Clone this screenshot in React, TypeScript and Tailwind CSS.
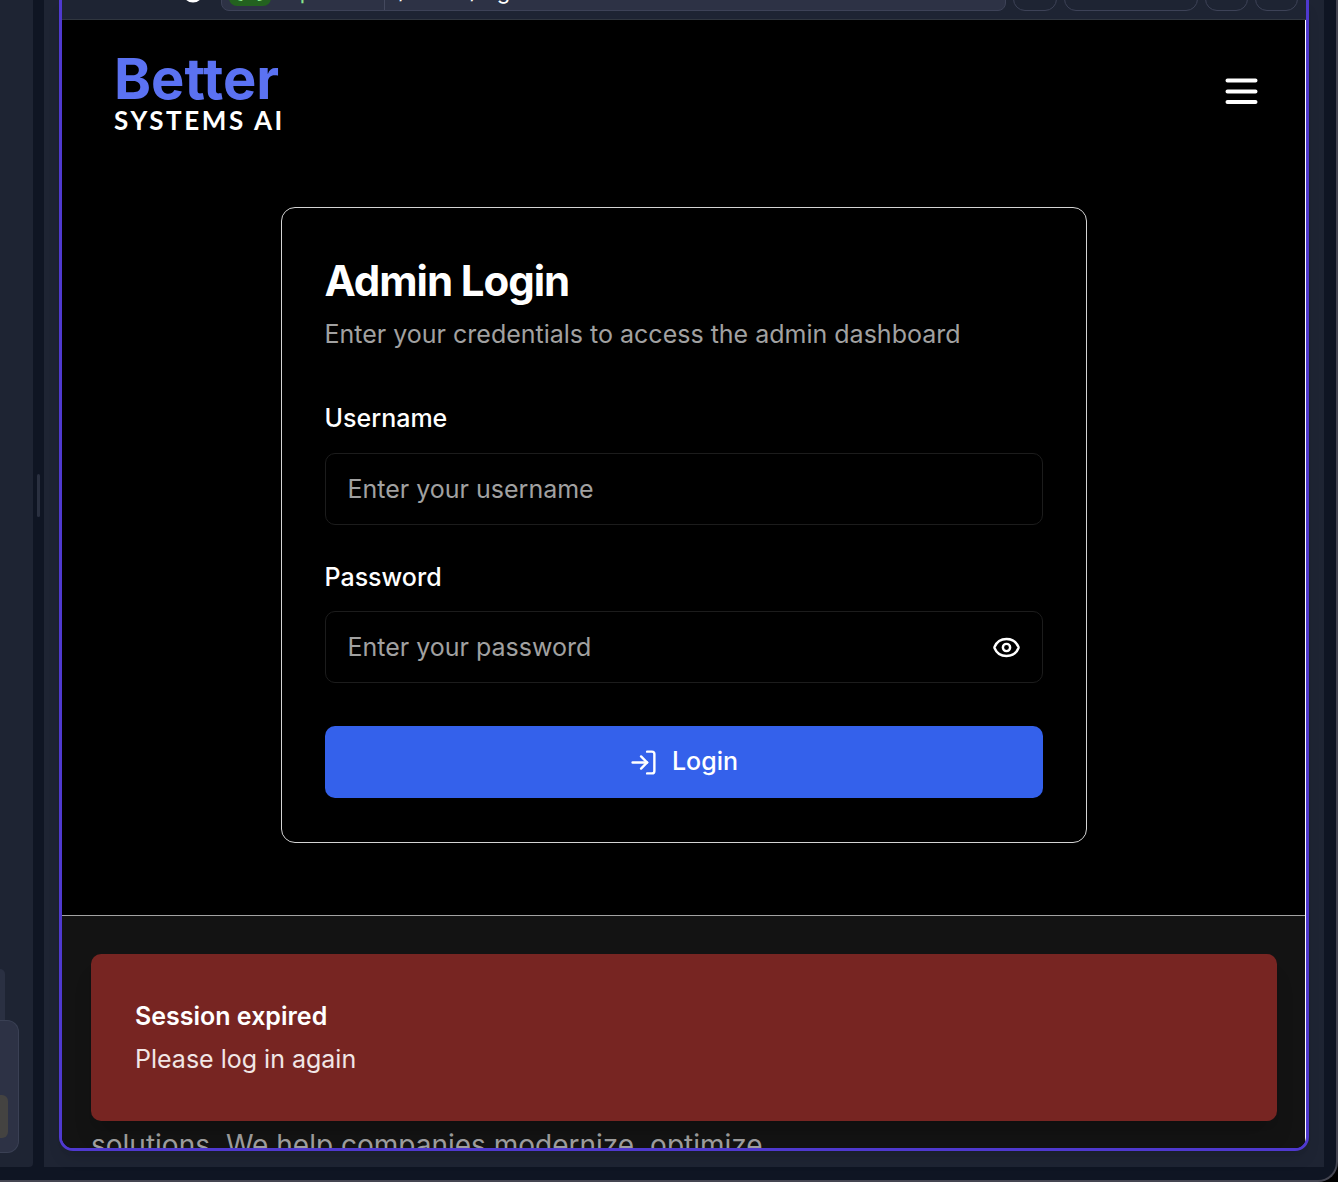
import { useState } from "react";
import { Eye, LogIn } from "lucide-react";

const barButton = "h-11 shrink-0 rounded-xl border border-[#3d4257]";

function SidePanel() {
  return (
    <aside className="flex w-[33px] shrink-0 flex-col items-start justify-end overflow-hidden rounded-br bg-[#1e2433] pb-[14px]">
      <div className="h-[51px] w-[5px] rounded-tr-md bg-[#2a3042]" />
      <div className="flex h-[133px] w-[19px] items-end rounded-r-xl border-y border-r border-[#3a4054] bg-[#2d3245] pb-[14px]">
        <div className="h-[43px] w-2 rounded-r-md bg-[#444341]" />
      </div>
    </aside>
  );
}

function Toolbar() {
  return (
    <div className="flex h-5 shrink-0 items-end gap-[7px] overflow-hidden border-b border-[#30363f] bg-[#1e2433] pr-2 pb-2 pl-[123px]">
      <svg className="mb-2 h-6 w-5 shrink-0" viewBox="0 0 20 24" fill="none" stroke="white" strokeWidth="3" aria-hidden="true">
        <circle cx="8" cy="13" r="9" />
      </svg>
      <div className="ml-[9px] flex h-11 min-w-0 flex-1 items-end overflow-hidden rounded-lg border border-[#3d4257] bg-[#2d3245] text-[22px] whitespace-nowrap text-white">
        <div className="flex h-11 w-[163px] shrink-0 items-end border-r border-[#44495e] pl-[7px]">
          <span className="mb-1 flex h-8 w-[42px] items-center justify-between rounded-lg bg-[#23621f] px-1 font-bold text-[#8ae68c]">
            <span>{"{"}</span>
            <span>{"}"}</span>
          </span>
          <span className="mb-[2px] ml-[2px] text-[#8ae68c]">http</span>
        </div>
        <span className="mb-[2px] pl-[14px]">/admin/login</span>
      </div>
      <button type="button" aria-label="Reload" className={barButton + " w-11"} />
      <button type="button" aria-label="Screen size" className={barButton + " w-[134px]"} />
      <button type="button" aria-label="Open in new tab" className={barButton + " w-[43px]"} />
      <button type="button" aria-label="Full screen" className={barButton + " w-[43px]"} />
    </div>
  );
}

function Header() {
  return (
    <header className="flex h-[143px] shrink-0 items-center justify-between pr-[42px] pl-[52px]">
      <a href="#home" className="flex flex-col font-bold">
        <span className="text-[56px] leading-[56px] text-[#5b72f2]">Better</span>
        <span className="font-['Lato',sans-serif] text-[26px] leading-[26px] tracking-widest text-white">SYSTEMS AI</span>
      </a>
      <button type="button" aria-label="Menu" className="text-white">
        <svg className="h-[43px] w-[43px]" viewBox="0 0 43 43" stroke="currentColor" strokeWidth="4" strokeLinecap="round" aria-hidden="true">
          <path d="M7.5 10.5H35.5M7.5 21.5H35.5M7.5 32H35.5" />
        </svg>
      </button>
    </header>
  );
}

const fieldClass =
  "h-[72px] w-full rounded-[10px] border border-[#1c1c1c] bg-black px-[22px] text-[25px] text-white placeholder:text-[#a1a1a1] placeholder:opacity-100";

function LoginCard() {
  const [shown, setShown] = useState(false);
  return (
    <form
      className="mx-auto flex w-full max-w-[806px] flex-col rounded-[14px] border border-[#d4d4d4] p-[43px] pb-11 text-[25px]"
      onSubmit={(e) => e.preventDefault()}
    >
      <h1 className="mt-2 text-[42px] leading-[44px] font-bold tracking-tight text-white">Admin Login</h1>
      <p className="mt-[13px] leading-9 text-[#a1a1a1]">Enter your credentials to access the admin dashboard</p>
      <label htmlFor="username" className="mt-12 leading-9 font-medium text-white">Username</label>
      <input id="username" type="text" placeholder="Enter your username" className={fieldClass + " mt-[17px]"} />
      <label htmlFor="password" className="mt-[34px] leading-9 font-medium text-white">Password</label>
      <div className="relative mt-4">
        <input id="password" type={shown ? "text" : "password"} placeholder="Enter your password" className={fieldClass} />
        <button
          type="button"
          aria-label="Show password"
          onClick={() => setShown(!shown)}
          className="absolute inset-y-0 right-0 flex w-[72px] items-center justify-center text-white"
        >
          <Eye size={29} />
        </button>
      </div>
      <button type="submit" className="mt-[43px] flex h-[72px] items-center justify-center gap-[14px] rounded-[10px] bg-[#3461eb] font-medium text-white">
        <LogIn size={29} strokeWidth={2} />
        Login
      </button>
    </form>
  );
}

function Footer() {
  return (
    <footer className="relative min-h-0 flex-1 overflow-hidden border-t border-[#a3a3a3] bg-[#131313]">
      <p className="mt-[209px] px-[29px] text-[28px] leading-10 text-[#a1a1a1]">
        solutions. We help companies modernize, optimize
      </p>
      <div role="alert" className="absolute inset-x-[28px] top-[38px] ml-px flex h-[167px] flex-col justify-center rounded-[10px] bg-[#772522] px-11 text-[25px] shadow-xl">
        <p className="leading-9 font-semibold text-white">Session expired</p>
        <p className="mt-[7px] leading-9 text-[#f1e6e6]">Please log in again</p>
      </div>
    </footer>
  );
}

export default function App() {
  return (
    <div className="h-screen bg-black font-['Inter',sans-serif]">
      <div className="flex h-full overflow-hidden rounded-br-[20px] border-r-2 border-b-2 border-[#454652] bg-[#0f1523] pr-3 pb-[13px]">
        <SidePanel />
        <div className="flex w-[11px] shrink-0 pl-1">
          <div className="mt-[474px] h-[43px] w-[3px] rounded-sm bg-[#2a3040]" />
        </div>
        <section className="flex min-w-0 flex-1 bg-[#1e2433] pr-[15px] pb-4 pl-[15px]">
          <div className="flex min-w-0 flex-1 flex-col overflow-hidden rounded-b-[14px] border-x-[3px] border-b-[3px] border-[#4f39cf] bg-black shadow-lg">
            <Toolbar />
            <div className="flex min-h-0 flex-1 flex-col border-r border-white">
              <Header />
              <main className="px-11 pt-11 pb-[72px]">
                <LoginCard />
              </main>
              <Footer />
            </div>
          </div>
        </section>
      </div>
    </div>
  );
}
